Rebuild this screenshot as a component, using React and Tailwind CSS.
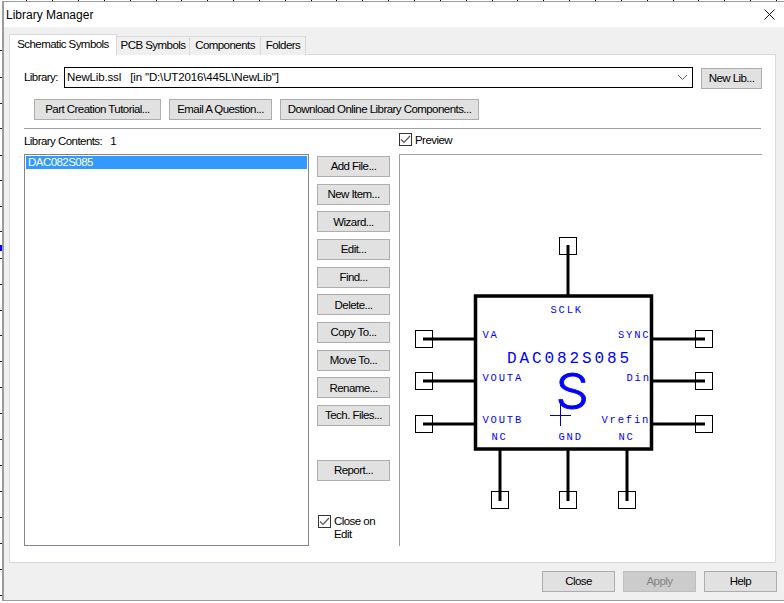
import React from "react";

const Btn = ({ className = "", children, disabled }) => (
  <button
    className={
      "h-[21px] border flex items-center justify-center shrink-0 whitespace-nowrap pt-px " +
      (disabled ? "bg-[#cccccc] border-[#bfbfbf] text-[#838383] " : "bg-[#e1e1e1] border-[#adadad] text-black ") +
      className
    }
  >
    {children}
  </button>
);

const Check = () => (
  <span className="w-[13px] h-[13px] border border-[#333333] bg-white flex items-center justify-center shrink-0">
    <svg width="11" height="11" viewBox="0 0 11 11" fill="none">
      <path d="M1 5.5 L4 8.5 L10 2" stroke="#555555" strokeWidth="1.2" />
    </svg>
  </span>
);

const tops = [414, 388, 362, 336, 311, 285, 259, 233, 207, 181, 156, 130, 104, 78, 52, 26, 440, 466, 492, 517, 543, 569, 595, 621, 647, 673, 698, 724, 750, 776];
const lefts = [50, 77, 103, 128, 155, 180, 206, 231, 258, 284, 310, 335, 361, 387, 413, 439, 465, 491, 517, 543, 569, 595];

const Backdrop = () => (
  <svg className="absolute inset-0" width="784" height="603">
    {tops.map((x) => (
      <rect key={x} x={x} y="0" width="1" height="1" fill="#000000" />
    ))}
    {lefts.map((y) => (
      <rect key={y} x="0" y={y} width="2" height="1" fill="#222222" />
    ))}
    <rect x="0" y="245" width="2" height="6" fill="#0000ff" />
  </svg>
);

const PinBox = ({ x, y }) => <rect x={x - 8.5} y={y - 8.5} width="17" height="17" fill="none" stroke="#000" strokeWidth="1" />;

const Label = ({ x, y, children }) => (
  <text x={x} y={y} fontFamily="'Liberation Mono', monospace" fontSize="10.5" letterSpacing="1.8" fill="#0000ff">
    {children}
  </text>
);

const Symbol = () => (
  <svg className="block" width="362" height="391" viewBox="400 155 362 391">
    {[339, 381, 424].map((y) => (
      <g key={y}>
        <PinBox x={424} y={y} />
        <PinBox x={704} y={y} />
        <line x1="423" y1={y} x2="475" y2={y} stroke="#000" strokeWidth="3" />
        <line x1="652" y1={y} x2="705" y2={y} stroke="#000" strokeWidth="3" />
      </g>
    ))}
    <PinBox x={568} y={246} />
    <line x1="568" y1="245" x2="568" y2="296" stroke="#000" strokeWidth="3" />
    {[500, 568, 627].map((x) => (
      <g key={x}>
        <PinBox x={x} y={500} />
        <line x1={x} y1="450" x2={x} y2="501" stroke="#000" strokeWidth="3" />
      </g>
    ))}
    <rect x="475.5" y="296" width="176" height="153" fill="none" stroke="#000" strokeWidth="3.5" />
    <Label x={550.5} y={313}>SCLK</Label>
    <Label x={482.5} y={338}>VA</Label>
    <Label x={618} y={338}>SYNC</Label>
    <Label x={482.5} y={381}>VOUTA</Label>
    <Label x={626.5} y={381}>Din</Label>
    <Label x={482.5} y={423}>VOUTB</Label>
    <Label x={601.5} y={423}>Vrefin</Label>
    <Label x={491.5} y={440}>NC</Label>
    <Label x={558.5} y={440}>GND</Label>
    <Label x={618.5} y={440}>NC</Label>
    <text x="507" y="363" fontFamily="'Liberation Mono', monospace" fontSize="16" letterSpacing="2.9" fill="#0000ff">
      DAC082S085
    </text>
    <text transform="translate(555.5 408) scale(1.1 1)" fontFamily="Inter, sans-serif" fontWeight="300" fontSize="48" fill="#0000ff" stroke="#0000ff" strokeWidth="0.8">
      S
    </text>
    <line x1="550" y1="415.5" x2="571" y2="415.5" stroke="#0000c0" strokeWidth="1" />
    <line x1="560.5" y1="404" x2="560.5" y2="426" stroke="#0000c0" strokeWidth="1" />
  </svg>
);

const tabs = [
  ["PCB Symbols", "w-[73px]"],
  ["Components", "w-[71px]"],
  ["Folders", "w-[45px]"],
];

const sideButtons = ["Add File...", "New Item...", "Wizard...", "Edit...", "Find...", "Delete...", "Copy To...", "Move To...", "Rename...", "Tech. Files..."];

export default function App() {
  return (
    <div className="relative w-[784px] h-[603px] bg-white overflow-hidden text-[11.5px] tracking-[-0.55px] text-black font-['Liberation_Sans',sans-serif]">
      <Backdrop />
      <div className="absolute left-[2px] top-[1px] w-[782px] h-[600px] flex flex-col border-t border-b border-l-2 border-[#9c9c9c]">
        <div className="h-[25px] shrink-0 bg-white flex items-center justify-between pl-[2px] pr-[9px]">
          <span className="text-[12px] tracking-normal">Library Manager</span>
          <svg width="11" height="11" viewBox="0 0 11 11">
            <path d="M0.5 0.5 L10.5 10.5 M10.5 0.5 L0.5 10.5" stroke="#111111" strokeWidth="1" />
          </svg>
        </div>
        <div className="flex-1 min-h-0 bg-[#f0f0f0] flex flex-col pl-[5px] pr-[7px] pt-[7px]">
          <div className="flex items-end h-[21px] -mb-px relative z-10 shrink-0 whitespace-nowrap">
            <div className="w-[108px] h-[21px] bg-white border border-b-0 border-[#d9d9d9] flex items-center justify-center">Schematic Symbols</div>
            {tabs.map(([t, w]) => (
              <div key={t} className={w + " h-[19px] bg-[#f0f0f0] border border-l-0 border-b-0 border-[#d9d9d9] flex items-center justify-center"}>
                {t}
              </div>
            ))}
          </div>
          <div className="flex-1 min-h-0 w-[767px] bg-white border border-[#d9d9d9] flex flex-col pl-[14px] pt-[12px]">
            <div className="flex h-[22px] shrink-0">
              <span className="w-[40px] h-[21px] flex items-center">Library:</span>
              <div className="w-[629px] h-[21px] border border-black flex items-center justify-between pl-[2px] pr-[4px]">
                <span className="whitespace-pre tracking-[-0.15px]">NewLib.ssl   [in "D:\UT2016\445L\NewLib"]</span>
                <svg width="11" height="7" viewBox="0 0 11 7" fill="none">
                  <path d="M1 1 L5.5 5.5 L10 1" stroke="#606060" strokeWidth="1" />
                </svg>
              </div>
              <Btn className="w-[61px] ml-[8px] mt-[1px]">New Lib...</Btn>
            </div>
            <div className="flex gap-[8px] ml-[10px] mt-[10px] shrink-0">
              <Btn className="w-[127px]">Part Creation Tutorial...</Btn>
              <Btn className="w-[103px]">Email A Question...</Btn>
              <Btn className="w-[199px]">Download Online Library Components...</Btn>
            </div>
            <div className="w-[737px] h-px bg-[#a0a0a0] mt-[8px] shrink-0" />
            <div className="flex flex-1 min-h-0 pb-[16px]">
              <div className="w-[285px] flex flex-col">
                <div className="h-[25px] flex items-center whitespace-pre shrink-0">Library Contents:   1</div>
                <div className="flex-1 border border-[#82878f] p-px">
                  <div className="h-[13px] bg-[#3399ff] text-white flex items-center pl-[2px] pt-px">DAC082S085</div>
                </div>
              </div>
              <div className="w-[73px] ml-[8px] flex flex-col pt-[27px]">
                <div className="flex flex-col gap-[6.67px]">
                  {sideButtons.map((b) => (
                    <Btn key={b} className="w-[73px]">{b}</Btn>
                  ))}
                </div>
                <Btn className="w-[73px] mt-[34px]">Report...</Btn>
                <div className="flex mt-[34px] pl-px gap-[3px] leading-[13px]">
                  <Check />
                  <span>Close on<br />Edit</span>
                </div>
              </div>
              <div className="w-[363px] ml-[9px] flex flex-col">
                <div className="h-[25px] flex items-start pt-[4px] gap-[3px] shrink-0 leading-[14px]">
                  <Check />
                  <span>Preview</span>
                </div>
                <div className="flex-1 border-t border-l border-[#a0a0a0]">
                  <Symbol />
                </div>
              </div>
            </div>
          </div>
          <div className="h-[37px] shrink-0 flex items-center justify-end gap-[8px]">
            <Btn className="w-[73px]">Close</Btn>
            <Btn className="w-[73px]" disabled>Apply</Btn>
            <Btn className="w-[73px]">Help</Btn>
          </div>
        </div>
      </div>
    </div>
  );
}
